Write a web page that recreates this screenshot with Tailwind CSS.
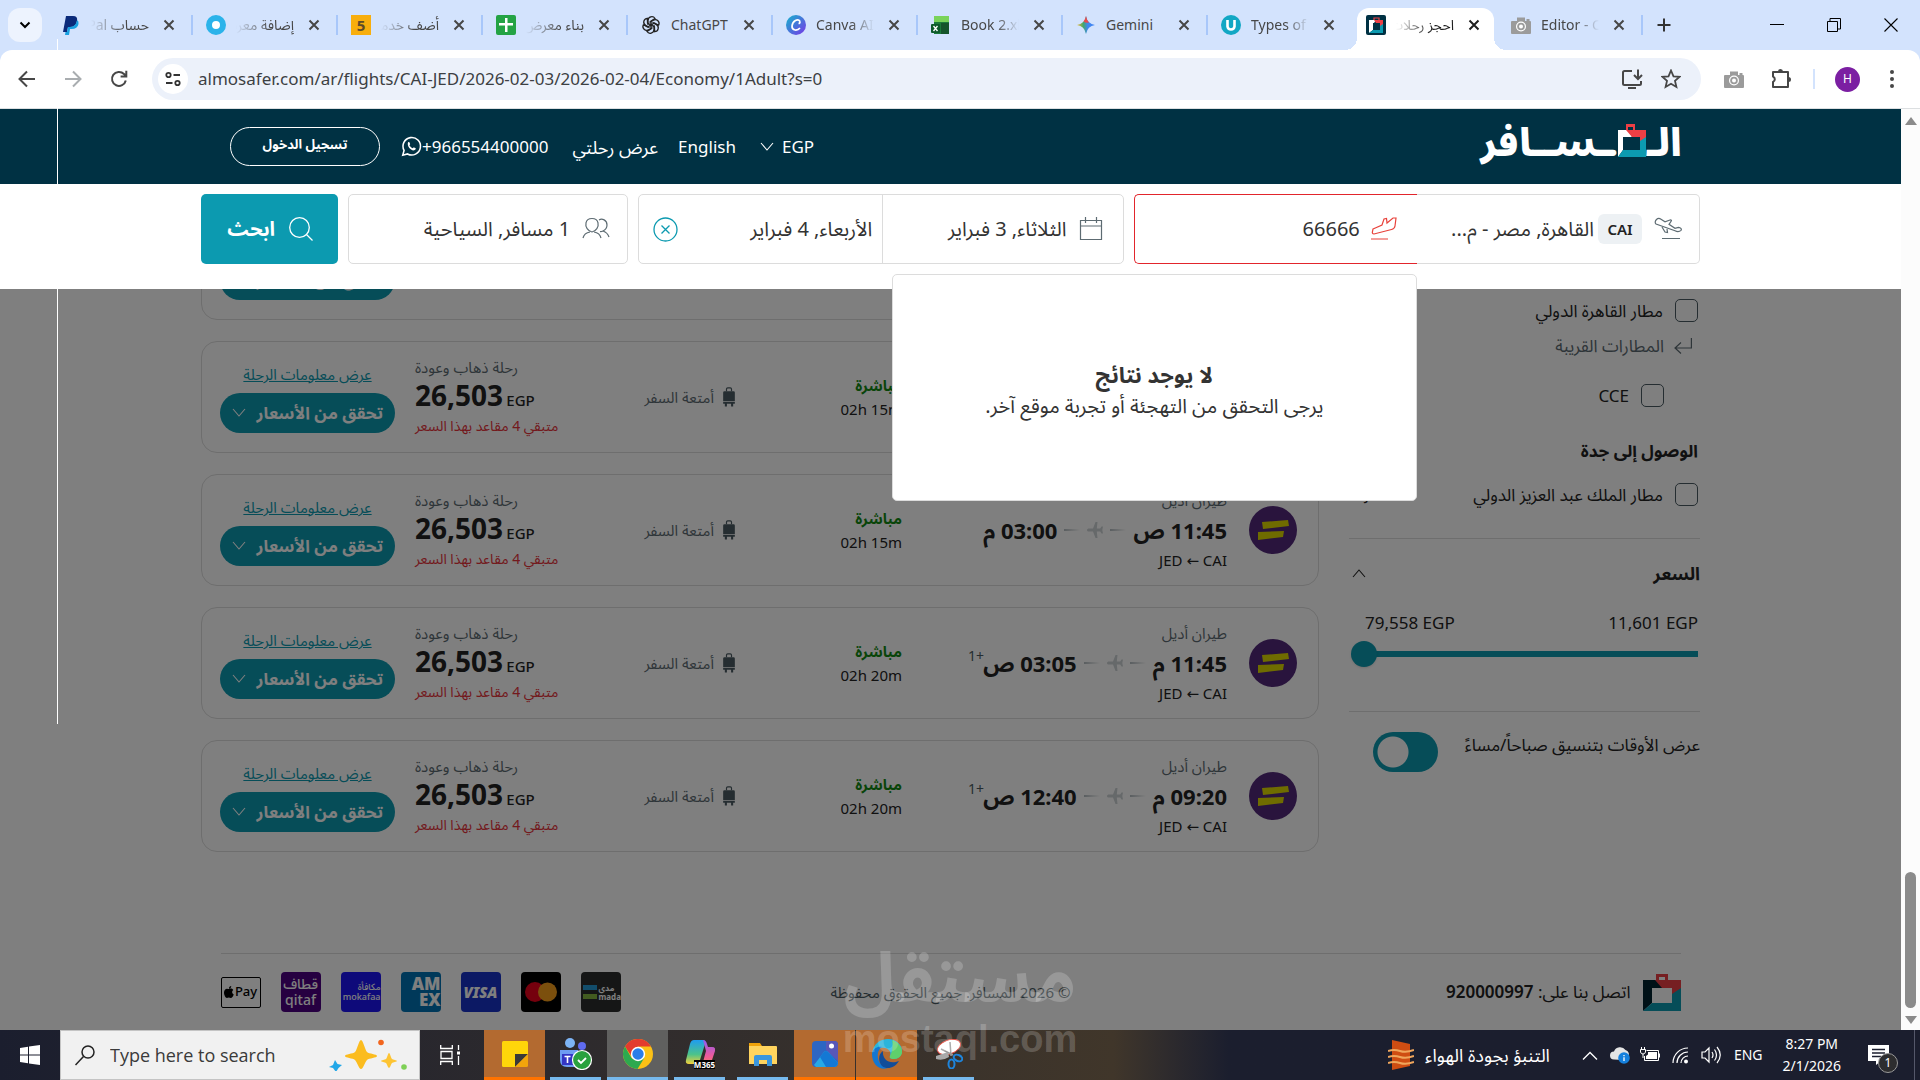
<!DOCTYPE html>
<html lang="ar">
<head>
    <meta charset="UTF-8">
    <meta name="viewport" content="width=device-width, initial-scale=1.0">
    <title>احجز رحلات الطيران - المسافر</title>
    <script src="https://cdn.jsdelivr.net/npm/@tailwindcss/browser@4"></script>
</head>
<body class="h-screen overflow-hidden bg-white font-['Noto_Sans','Noto_Sans_Arabic','DejaVu_Sans',sans-serif] text-[#222]">

  <!-- Icon sprite -->
  <svg class="hidden" xmlns="http://www.w3.org/2000/svg">
    <symbol id="i-close" viewBox="0 0 12 12"><path d="M1.5 1.5l9 9M10.5 1.5l-9 9" fill="none" stroke="currentColor" stroke-width="2"/></symbol>
    <symbol id="i-down" viewBox="0 0 14 9"><path d="M1 1l6 7 6-7" fill="none" stroke="currentColor" stroke-width="1.1"/></symbol>
    <symbol id="i-camera" viewBox="0 0 20 20"><path d="M2 6h4V2.5h8V6h1.5V4h3v2H19a1 1 0 0 1 1 1v11a1 1 0 0 1-1 1H1a1 1 0 0 1-1-1V7a1 1 0 0 1 1-1z" fill="#9b9b9b"/><circle cx="10" cy="11.500" r="5" fill="#fff"/><circle cx="10" cy="11.500" r="3.800" fill="#9b9b9b"/><circle cx="10" cy="11.500" r="2" fill="#fff"/></symbol>
    <symbol id="i-case" viewBox="0 0 38 38"><path d="M13 7V1h12v6h-3V4h-6v3z" fill="#ec3f45"/><path d="M0 7h14l6 8H9v15l-9 8z" fill="#00222f"/><path d="M12 7h26v9l-9 6v-7H19z" fill="#ec3f45"/><path d="M38 15v23H0l9-8h20v-9z" fill="#0c9ab0"/></symbol>
    <symbol id="i-bag" viewBox="0 0 16 24"><path d="M5 5V2.500A1.500 1.500 0 0 1 6.500 1h3A1.500 1.500 0 0 1 11 2.500V5" fill="none" stroke="#4a5a62" stroke-width="1.400"/><path d="M1 6.500A1.500 1.500 0 0 1 2.500 5h11A1.500 1.500 0 0 1 15 6.500V17H1zM1 18h14v2h-2v3.500h-2.500V20h-5v3.500H3V20H1z" fill="#4a5a62"/></symbol>
    <symbol id="i-plane" viewBox="0 0 16 16"><path d="M0 8c0-1 .8-1.600 2-1.600h4L8.500 0h2L9.800 6.400h3.400L14.500 4.500H16L15.300 8l.7 3.500h-1.500l-1.300-1.900H9.800l.7 6.400h-2L6 9.600H2C.8 9.600 0 9 0 8z" fill="#cdd2d5"/></symbol>
    <symbol id="i-adeal" viewBox="0 0 48 48"><circle cx="24" cy="24" r="24" fill="#52297a"/><path d="M13 16l26-2 1 6-26 3zM9 26l26-1-1 6-25 3z" fill="#dfd800"/></symbol>
  </svg>

  <div class="relative flex h-full flex-col">

    <!-- Tab strip -->
    <div class="flex h-[50px] shrink-0 items-end bg-[#d3e3fd] text-sm text-[#474747]">
      <div class="w-12 self-center pl-2">
        <button class="grid size-[34px] place-items-center rounded-xl bg-[#edf3fe] text-black" aria-label="Search tabs">
          <svg class="h-2 w-3" viewBox="0 0 12 8"><path d="M1.500 1.500L6 6l4.500-4.500" fill="none" stroke="currentColor" stroke-width="2"/></svg>
        </button>
      </div>
      <div id="tabs" class="flex"></div>
      <button class="ml-[13px] self-center" aria-label="New tab">
        <svg class="size-4" viewBox="0 0 16 16"><path d="M8 1.500v13M1.500 8h13" stroke="#333" stroke-width="2"/></svg>
      </button>
      <div class="ml-auto flex items-center gap-[43px] self-center pr-[22px]">
        <button aria-label="Minimize"><svg class="h-3.5 w-3.5" viewBox="0 0 14 14"><path d="M0 6.500h14" stroke="#000"/></svg></button>
        <button aria-label="Restore"><svg class="h-3.5 w-3.5" viewBox="0 0 14 14"><path d="M.5 3.500h10v10H.5zM3 3.500v-3h10.500v10.500h-3" fill="none" stroke="#000"/></svg></button>
        <button aria-label="Close"><svg class="h-3.5 w-3.5" viewBox="0 0 14 14"><path d="M.5.5l13 13M13.500.5l-13 13" stroke="#000" stroke-width="1.100"/></svg></button>
      </div>
    </div>

    <!-- Toolbar -->
    <div class="bg-[#d3e3fd]">
      <div class="flex h-[59px] items-center rounded-t-xl border-b border-[#dcdfe1] bg-white pr-[25px] pl-[18px]">
        <button aria-label="Back"><svg class="size-[18px]" viewBox="0 0 18 18"><path d="M17 9H2M9 1.500L1.500 9 9 16.500" fill="none" stroke="#474747" stroke-width="2"/></svg></button>
        <button class="ml-7" aria-label="Forward"><svg class="size-[18px]" viewBox="0 0 18 18"><path d="M1 9h15M9 1.500L16.500 9 9 16.500" fill="none" stroke="#a9adb0" stroke-width="2"/></svg></button>
        <button class="ml-7" aria-label="Reload"><svg class="size-[18px]" viewBox="0 0 18 18"><path d="M15.800 10.500A7 7 0 1 1 14 4l2 2M16.300.8V6.500h-5.700" fill="none" stroke="#474747" stroke-width="2"/></svg></button>
        <div class="ml-6 flex h-[42px] flex-1 items-center rounded-full bg-[#ecf1fa] px-1.5">
          <button class="grid size-[30px] place-items-center rounded-full bg-white" aria-label="Site information">
            <svg class="size-4" viewBox="0 0 16 16" fill="none" stroke="#333" stroke-width="1.800"><circle cx="3.500" cy="4" r="2.200"/><path d="M8.500 4H15M1 12h6.500"/><circle cx="12.500" cy="12" r="2.200"/></svg>
          </button>
          <input class="ml-2.5 min-w-0 flex-1 bg-transparent text-[17px] text-[#3c4043] outline-none" aria-label="Address" value="almosafer.com/ar/flights/CAI-JED/2026-02-03/2026-02-04/Economy/1Adult?s=0">
          <button class="mr-[18px]" aria-label="Install app"><svg class="size-[22px]" viewBox="0 0 22 22" fill="none" stroke="#474747" stroke-width="2"><path d="M11 3H3.500Q2 3 2 4.500v11Q2 17 3.500 17h15q1.500 0 1.500-1.500V13M7 20h8M17 1.500v9M13 7l4 4 4-4"/></svg></button>
          <button class="mr-3.5" aria-label="Bookmark"><svg class="size-5" viewBox="0 0 20 20"><path d="M10 1.500l2.500 5.800 6.200.5-4.700 4.100 1.400 6.100-5.400-3.200L4.600 18 6 11.900 1.300 7.800l6.200-.5z" fill="none" stroke="#474747" stroke-width="1.800"/></svg></button>
        </div>
        <button class="ml-[23px]" aria-label="Screenshot extension"><svg class="size-5"><use href="#i-camera"/></svg></button>
        <button class="ml-[25px]" aria-label="Extensions"><svg class="size-6" viewBox="0 0 24 24"><path d="M4 5h15v15H4v-5a3 3 0 0 0 0-5.500z" fill="none" stroke="#474747" stroke-width="2" stroke-linejoin="round"/><path d="M9 4.500a2.500 2.500 0 0 1 5 0zM19.500 10a2.500 2.500 0 0 1 0 5z" fill="#474747"/></svg></button>
        <span class="ml-5 h-[20px] w-0.5 bg-[#d3e3fd]"></span>
        <button class="ml-5 grid size-[25px] place-items-center rounded-full bg-[#7b1fa2] text-xs text-white" aria-label="Profile">H</button>
        <button class="ml-[29px]" aria-label="Menu"><svg class="h-5 w-1.5" viewBox="0 0 6 20" fill="#474747"><circle cx="3" cy="3" r="2"/><circle cx="3" cy="10" r="2"/><circle cx="3" cy="17" r="2"/></svg></button>
      </div>
    </div>

    <!-- Page -->
    <div class="flex min-h-0 flex-1">
      <div dir="rtl" class="flex min-w-0 flex-1 flex-col">

        <!-- Site header -->
        <header class="flex h-[75px] shrink-0 items-center justify-between bg-[#003143] pr-[219px] pl-[230px] text-white">
          <a href="#" class="flex items-end pb-3 text-[38px] leading-[48px] font-black" aria-label="المسافر">
            <span>الـ</span>
            <svg class="mb-2 h-[33px] w-7" viewBox="0 0 28 33"><path d="M8 6V0h9v6h-2V3h-5v3z" fill="#ec3f45"/><path d="M0 6h10l4 7H5v13l-5 7z" fill="#fff"/><path d="M8 6h20v8l-6 4v-5h-8z" fill="#ec3f45"/><path d="M28 13v20H0l5-7h17v-9z" fill="#0c9ab0"/></svg>
            <span>ـســافر</span>
          </a>
          <nav class="flex items-center text-[17px]">
            <a href="#egp" class="flex items-center gap-2">EGP <svg class="h-[9px] w-3.5"><use href="#i-down"/></svg></a>
            <a href="#en" class="mr-6">English</a>
            <a href="#trip" class="mr-5 text-lg">عرض رحلتي</a>
            <a href="#whatsapp" dir="ltr" class="mr-6 flex items-center">
              <svg class="size-[21px]" viewBox="0 0 24 24" fill="none" stroke="#fff" stroke-width="1.800"><path d="M2 22l1.500-5.500A10 10 0 1 1 7.500 20.500z"/><path d="M8 7.500c.5-1 1.500-.6 1.800 0l.6 1.500c.2.600-.8 1.200-.7 1.600.8 1.600 2 2.700 3.600 3.400.5.100 1-1.200 1.600-1l1.600.8c.8.500.2 2.200-1.300 2.600-4 .7-8.600-4.500-7.200-8.900z" fill="#fff" stroke="none"/></svg>
              +966554400000
            </a>
            <button class="mr-[21px] h-[39px] w-[150px] rounded-full border border-white pb-1 text-[13px] font-bold">تسجيل الدخول</button>
          </nav>
        </header>

        <!-- Search bar -->
        <form class="z-20 h-[105px] shrink-0 bg-white pt-2.5" onsubmit="return false">
          <div class="mx-auto grid h-[70px] max-w-[1499px] grid-cols-[566fr_485fr_280fr_137px] gap-2.5 text-xl text-[#333]">
            <div class="grid grid-cols-2">
              <button type="button" class="flex min-w-0 items-center rounded-r-[5px] border border-l-0 border-[#dcdcdc] pr-[17px] whitespace-nowrap">
                <svg class="h-6 w-7 shrink-0" viewBox="0 0 28 24" fill="none" stroke="#5d6b72" stroke-width="1.200"><path d="M2.500 2.500c1.500-1.500 3-1.300 4.500-.3l4 2.600 5-1.800c1-.3 2 .5 1 1.300l-2 3 6 4 3.500-1c2 .3 3.500 1.500 2.500 3-1.500 1.500-4 1.500-6 .5L2 7C.8 6 1 4 2.500 2.500zM8 10l3 5 2.500.5L13 12M8 21.500h18"/></svg>
                <span class="mr-3 grid h-[30px] w-11 place-items-center rounded-md bg-[#edf1f4] text-[15px] font-semibold text-[#222]">CAI</span>
                <span class="mr-1">القاهرة, مصر - م...</span>
              </button>
              <div class="relative flex items-center rounded-l-[5px] border border-r-0 border-[#e2252c] pr-[19px]">
                <svg class="h-6 w-7 shrink-0" viewBox="0 0 28 24" fill="none" stroke="#e8413a" stroke-width="1.200"><path d="M3 12l9-4 2-6 2.500-.5L17 6l6-5 3 0-1 8c-.3 2-1.500 3-3.500 3.500L4 17c-1.500 0-2-1-1.500-2.500zM1 22h17"/></svg>
                <input class="mr-2.5 w-40 min-w-0 bg-transparent outline-none" aria-label="الوجهة" value="66666">
                <!-- Suggestions -->
                <div class="absolute top-[79px] right-0 flex h-[227px] w-[525px] flex-col items-center justify-center rounded-[5px] border border-[#dcdcdc] bg-white pt-1">
                  <strong class="text-[22px] leading-8">لا يوجد نتائج</strong>
                  <p class="text-xl leading-8">يرجى التحقق من التهجئة أو تجربة موقع آخر.</p>
                </div>
              </div>
            </div>
            <div class="flex rounded-[5px] border border-[#dcdcdc]">
              <button type="button" class="flex flex-1 items-center gap-3 border-l border-[#dcdcdc] pr-5">
                <svg class="size-6" viewBox="0 0 24 24" fill="none" stroke="#5d6b72" stroke-width="1.200"><path d="M1.500 3.500h21v19h-21zM1.500 9h21M6.500 0v6M17.500 0v6"/></svg>
                الثلاثاء, 3 فبراير
              </button>
              <div class="flex flex-1 items-center justify-between pr-2.5 pl-3.5">
                <button type="button">الأربعاء, 4 فبراير</button>
                <button type="button" aria-label="إزالة تاريخ العودة"><svg class="size-[25px]" viewBox="0 0 25 25" fill="none" stroke="#0c9ab0" stroke-width="1.300"><circle cx="12.500" cy="12.500" r="11.500"/><path d="M8.500 8.500l8 8M16.500 8.500l-8 8"/></svg></button>
              </div>
            </div>
            <button type="button" class="flex items-center gap-3 rounded-[5px] border border-[#dcdcdc] pr-[17px]">
              <svg class="h-6 w-7" viewBox="0 0 28 24" fill="none" stroke="#5d6b72" stroke-width="1.200"><path d="M10 15c-4-1-7-5-6-9 1-6 11-6 12 0 1 4-2 8-6 9zM1 21c1-4 4-5.500 7-6M19 21c-1-4-4-5.500-7-6M17 3c3-2 8 0 8 5 0 3-2 5-4 6 3 1 5 3 6 6M18 14.500c1 .2 2 0 3-.5"/></svg>
              1 مسافر, السياحية
            </button>
            <button type="submit" class="flex items-center gap-3.5 rounded-[5px] bg-[#0c9ab0] pr-[25px] font-bold text-white">
              <svg class="size-6" viewBox="0 0 24 24" fill="none" stroke="#fff" stroke-width="1.300"><circle cx="10.500" cy="10.500" r="9.800"/><path d="M17.500 17.500l6 6"/></svg>
              ابحث
            </button>
          </div>
        </form>

        <!-- Results -->
        <main class="relative flex min-h-0 flex-1 flex-col overflow-hidden bg-white">
          <div class="mx-auto flex w-full max-w-[1499px] gap-[30px]">

            <!-- Filters -->
            <aside class="w-[351px] shrink-0 pt-2.5 text-[17px]">
              <div class="px-0.5">
                <label class="flex h-[23px] items-center gap-3"><input type="checkbox" class="size-[23px] appearance-none rounded-[5px] border border-[#4a5a62]">مطار القاهرة الدولي</label>
                <p class="mt-3 flex h-6 items-center gap-2.5 pr-1.5 text-[#5d6b72]">
                  <svg class="h-4 w-[18px]" viewBox="0 0 18 16" fill="none" stroke="#5d6b72" stroke-width="1.200"><path d="M17.400 0v10H1M7 4.500L1 10l6 5.500"/></svg>
                  المطارات القريبة
                </p>
                <label class="mt-[26px] mr-[34px] flex h-[23px] items-center gap-3"><input type="checkbox" class="size-[23px] appearance-none rounded-[5px] border border-[#4a5a62]">CCE</label>
                <h4 class="mt-8 h-6 leading-6 font-bold">الوصول إلى جدة</h4>
                <label class="mt-5 flex h-[23px] items-center gap-3"><input type="checkbox" class="size-[23px] appearance-none rounded-[5px] border border-[#4a5a62]">مطار الملك عبد العزيز الدولي <span class="mr-auto ml-3.5 text-sm">JED</span></label>
              </div>
              <section class="mt-8 border-t border-[#dcdcdc] pt-5">
                <h3 class="flex items-center justify-between text-lg leading-7 font-bold">السعر <svg class="ml-[3px] h-[9px] w-3.5 rotate-180"><use href="#i-down"/></svg></h3>
                <div dir="ltr" class="mt-6 flex justify-between pr-0.5 pl-4 leading-6"><span>79,558 EGP</span><span>11,601 EGP</span></div>
                <input dir="ltr" type="range" value="0" aria-label="السعر" class="mt-[6px] mr-0.5 block h-[26px] w-[347px] appearance-none bg-[linear-gradient(#0c9ab0,#0c9ab0)] bg-[length:334px_6px] bg-right bg-no-repeat [&::-webkit-slider-thumb]:size-[26px] [&::-webkit-slider-thumb]:appearance-none [&::-webkit-slider-thumb]:rounded-full [&::-webkit-slider-thumb]:bg-[#0c9ab0] [&::-webkit-slider-thumb]:shadow">
              </section>
              <section class="mt-11 flex items-start justify-between border-t border-[#dcdcdc] pt-5">
                <label for="ampm" class="leading-[26px]">عرض الأوقات بتنسيق صباحاً/مساءً</label>
                <input id="ampm" type="checkbox" checked class="ml-6 h-10 w-[65px] shrink-0 appearance-none rounded-full bg-[#0c9ab0] bg-[radial-gradient(circle_at_20px_20px,#fff_15px,transparent_16px)]">
              </section>
            </aside>

            <div id="flights" class="-mt-[81px] flex flex-1 flex-col gap-[21px]"></div>
          </div>

          <!-- Footer -->
          <footer class="mx-auto mt-auto grid h-[77px] w-full max-w-[1460px] shrink-0 grid-cols-3 items-center border-t border-[#dcdcdc] text-[15px]">
            <div class="flex items-center gap-3">
              <svg class="size-[38px]"><use href="#i-case"/></svg>
              <p class="text-[17px]">اتصل بنا على: <a href="#tel" class="font-semibold">920000997</a></p>
            </div>
            <p class="text-center text-[#4a5a62]">© 2026 المسافر. جميع الحقوق محفوظة</p>
            <ul dir="ltr" class="flex items-center gap-5 justify-self-end">
              <li class="flex h-[31px] w-10 items-center justify-center gap-px rounded-xs border border-black text-[13px] font-medium text-black">
                <svg class="h-3 w-2.5" viewBox="0 0 10 12"><path d="M5 3c1-.6 3-.8 4.300.9C7.500 5 7.800 7.500 9.700 8.500 9 10.500 8 12 6.800 12c-.8 0-1.200-.5-2-.5S3.600 12 2.900 12C1.500 12 0 9 0 6.500S1.600 2.700 3 2.700c.8 0 1.400.3 2 .3zM5 2.500C4.900 1.200 6 0 7.200 0 7.400 1.300 6.300 2.600 5 2.500z"/></svg>Pay
              </li>
              <li class="flex size-10 flex-col items-center justify-center rounded-[4px] bg-[#4c0082] text-sm leading-4 font-medium text-white"><span>قطاف</span><span>qitaf</span></li>
              <li class="flex size-10 flex-col items-end justify-center rounded-[4px] bg-[#1d14f5] text-[9px] leading-[10px] font-medium text-white"><span>مكافأة</span><span>mokafaa</span></li>
              <li class="flex size-10 flex-col items-end justify-center overflow-hidden rounded-[4px] bg-[#0072b4] text-[17px] leading-4 font-black text-white"><span>AM</span><span>EX</span></li>
              <li class="grid size-10 place-items-center rounded-[4px] bg-[#1832c8] text-[15px] font-black text-white italic">VISA</li>
              <li class="grid size-10 place-items-center rounded-[4px] bg-black"><svg class="h-5 w-8" viewBox="0 0 32 20"><circle cx="10" cy="10" r="10" fill="#eb001b"/><circle cx="22.500" cy="10" r="9.500" fill="#f79e1b"/></svg></li>
              <li class="flex size-10 items-center gap-0.5 rounded-[4px] bg-[#2a2c2c] pl-0.5 text-[8px] leading-[9px] font-bold text-white">
                <span class="flex flex-col gap-1"><i class="block h-[5px] w-[14px] bg-[#259bd6]"></i><i class="block h-[5px] w-[14px] bg-[#84b740]"></i></span>
                <span class="flex flex-col"><span>مدى</span><span>mada</span></span>
              </li>
            </ul>
          </footer>
          <div class="absolute inset-0 bg-black/50"></div>
        </main>
      </div>

      <!-- Scrollbar -->
      <div class="flex w-[19px] shrink-0 flex-col items-center bg-[#fcfcfc] pt-2 pb-1.5">
        <svg class="h-2 w-3" viewBox="0 0 12 8"><path d="M6 0l6 8H0z" fill="#8b8b8b"/></svg>
        <div class="mt-auto mb-2 h-[136px] w-[11px] rounded-full bg-[#8b8b8b]"></div>
        <svg class="h-2 w-3" viewBox="0 0 12 8"><path d="M6 8l6-8H0z" fill="#8b8b8b"/></svg>
      </div>
    </div>

    <!-- Taskbar -->
    <div class="flex h-[50px] shrink-0 items-stretch bg-linear-to-r from-[#1b1e2e] via-[#40362a] via-[58%] to-[#1b1e2e] to-[64%] text-white">
      <button class="grid w-[60px] place-items-center" aria-label="Start"><svg class="size-5" viewBox="0 0 20 20" fill="#fff"><path d="M0 3l8-1.200V9.500H0zM9 1.600L20 0v9.500H9zM0 10.500h8v7.700L0 17zM9 10.500h11V20L9 18.400z"/></svg></button>
      <label class="flex w-[360px] items-center border border-[#c4c4c4] bg-[#f1f1f1] pr-2.5 pl-3.5 text-[#333]">
        <svg class="h-[21px] w-5" viewBox="0 0 20 21" fill="none" stroke="#222" stroke-width="1.500"><circle cx="13" cy="7" r="6"/><path d="M8.500 11.500L.5 20"/></svg>
        <input class="ml-[15px] min-w-0 flex-1 font-['Open_Sans','Noto_Sans',sans-serif] text-lg outline-none placeholder:text-[#3a3a3a]" placeholder="Type here to search" aria-label="Search">
        <svg class="h-8 w-20" viewBox="0 0 80 32"><path d="M32 1c2 0 4 10 6 12s10 2 10 4-8 2-10 4-4 9-6 9-4-7-6-9-10-2-10-4 8-2 10-4 4-12 6-12z" fill="#fbbc1f"/><path d="M60 14c1 0 2 5 3 6s5 1 5 2-4 1-5 2-2 5-3 5-2-4-3-5-5-1-5-2 4-1 5-2 2-6 3-6z" fill="#fdc433"/><path d="M6 21l2.500 4 4.500 1-3.500 3L7 33l-3-4-4-1 4-2z" fill="#22a7e8"/><circle cx="52" cy="3.500" r="2.800" fill="#f2651d"/><circle cx="75" cy="28" r="2.800" fill="#7ed056"/></svg>
      </label>
      <button class="grid w-16 place-items-center pr-1" aria-label="Task view"><svg class="size-5" viewBox="0 0 20 20" fill="none" stroke="#fff" stroke-width="1.300"><path d="M1 6.500h11v7H1zM.7 0v3.500h11.600V0M.7 20v-3.500h11.600V20M18.500 0v5M18.500 11v9"/><path d="M17 6.500h3v3h-3z" fill="#fff" stroke="none"/></svg></button>
      <button class="grid w-[61px] place-items-center border-b-[3px] border-[#ff7300] bg-[#b36a30]" aria-label="Sticky Notes"><svg class="size-[26px]" viewBox="0 0 26 26"><path d="M0 1.500Q0 0 1.500 0h23Q26 0 26 1.500V13L13 26H1.500Q0 26 0 24.500z" fill="#ffd60a"/><path d="M13 13h13L13 26z" fill="#3a3a38"/><path d="M26 13v11.500q0 1.500-1.500 1.500H13z" fill="#f2a50c"/></svg></button>
      <button class="mr-1.5 ml-[5px] grid w-[51px] place-items-center border-b-[3px] border-[#76b9ed]" aria-label="Teams"><svg class="h-8 w-[34px]" viewBox="0 0 34 32"><circle cx="11" cy="5" r="5" fill="#7db4f5"/><circle cx="23" cy="8" r="4" fill="#5f6bf0"/><path d="M1 12h18v17H8q-7 0-7-7z" fill="#6e9cf2"/><path d="M18 14h10v14H15z" fill="#6a5cf0"/><path d="M3 16h11v11H3z" fill="#3436c4"/><path d="M5.500 18.500h6M8.500 18.500v6.500" stroke="#fff" stroke-width="1.600"/><circle cx="23" cy="22" r="9.500" fill="#2aa13e" stroke="#fff" stroke-width="1.200"/><path d="M19 22l3 3 5-5" fill="none" stroke="#fff" stroke-width="1.800"/></svg></button>
      <button class="grid w-[61px] place-items-center border-b-[3px] border-[#76b9ed] bg-[#60605f]" aria-label="Chrome"><svg class="size-[30px]" viewBox="0 0 30 30"><circle cx="15" cy="15" r="15" fill="#fbc116"/><path d="M2 7.500A15 15 0 0 1 28 7.500H15L9 18z" fill="#e33b2e"/><path d="M2 7.500A15 15 0 0 0 14.500 30L21.500 18.500 15 22 8.500 19z" fill="#2da94f"/><circle cx="15" cy="15" r="7.200" fill="#fff"/><circle cx="15" cy="15" r="5.700" fill="#2b7de9"/></svg></button>
      <button class="mx-1.5 grid w-[51px] place-items-center border-b-[3px] border-[#76b9ed]" aria-label="Microsoft 365"><svg class="size-[30px]" viewBox="0 0 30 30"><defs><linearGradient id="ga" x2="0" y2="1"><stop stop-color="#1f9cf0"/><stop offset=".6" stop-color="#4cc38a"/><stop offset="1" stop-color="#f4d03a"/></linearGradient><linearGradient id="gb" x2="0" y2="1"><stop stop-color="#8d5cf2"/><stop offset=".6" stop-color="#ee5a9a"/><stop offset="1" stop-color="#f58b52"/></linearGradient></defs><path d="M9 1h9q3 0 2 4l-5 16q-1 4-5 4H4q-4 0-3-4L5 5q1-4 4-4z" fill="url(#ga)"/><path d="M18 1q3 0 4 4l1 3h4q4 0 3 4l-4 12q-1 4-5 4h-8q4-1 5-5l3-11z" fill="url(#gb)"/><path d="M9 21h21v9H9z" fill="#000"/><text x="19.500" y="28.500" font-size="8" font-weight="700" text-anchor="middle" fill="#fff">M365</text></svg></button>
      <button class="mx-1.5 grid w-[51px] place-items-center border-b-[3px] border-[#76b9ed]" aria-label="File Explorer"><svg class="h-6 w-7" viewBox="0 0 28 24"><path d="M0 1h11l2 3H0z" fill="#f0a30a"/><path d="M0 4h27q1 0 1 1v17H0z" fill="#ffd45e"/><path d="M5 24v-9q0-2 2-2h14q2 0 2 2v9h-5v-6h-8v6z" fill="#3a96dd"/></svg></button>
      <button class="grid w-[61px] place-items-center border-b-[3px] border-[#ff7300] bg-[#b36a30]" aria-label="Photos"><svg class="size-[26px]" viewBox="0 0 26 26"><rect width="26" height="26" rx="4" fill="#2d66c3"/><path d="M14 0h8q4 0 4 4v16L14 9z" fill="#5857b8"/><path d="M2 24L12 11q2-2 4 0l10 11q-1 4-4 4H4z" fill="#27a9e6"/><path d="M12 11q2-2 4 0l10 11q-1 4-4 4H14L8 16z" fill="#1478d4"/><circle cx="19.500" cy="5" r="2.500" fill="#fff"/></svg></button>
      <button class="ml-px grid w-[61px] place-items-center border-b-[3px] border-[#ff7300] bg-[#b36a30]" aria-label="Edge"><svg class="size-[30px]" viewBox="0 0 30 30"><path d="M0 15C1 5 8 0 16 0c8 0 14 6 14 12 0 5-4 8-8 8-3 0-5-1-4-3 2-6-4-9-9-8-4 1-8 3-9 6z" fill="#2bb5dc"/><path d="M20 1c6 2 10 7 10 12 0 4-4 7-8 7-3 0-5-1-4-3 3-5 3-11 2-16z" fill="#5fd06c"/><path d="M0 15c1-6 6-8 10-7-6 3-7 18 6 21C7 32 0 25 0 15z" fill="#1277d3"/><path d="M11 12c-1 8 6 14 16 10-4 7-12 9-17 5-4-4-4-12 1-15z" fill="#124d99"/></svg></button>
      <button class="mx-1.5 grid w-[51px] place-items-center border-b-[3px] border-[#76b9ed]" aria-label="Snip and Sketch"><svg class="h-[30px] w-7" viewBox="0 0 28 30"><ellipse cx="14" cy="8" rx="12" ry="7" fill="#fff" stroke="#e04a3f" transform="rotate(-20 14 8)"/><path d="M1 17l12-4 1 5q-6 4-13 2z" fill="#a9a9a9"/><path d="M15 3l1 14M6 10l12 6" stroke="#999" stroke-width="1.500"/><ellipse cx="23" cy="19" rx="4.500" ry="3" fill="none" stroke="#1e85dc" stroke-width="2" transform="rotate(25 23 19)"/><ellipse cx="16.500" cy="25" rx="3" ry="4.500" fill="none" stroke="#1e85dc" stroke-width="2"/></svg></button>

      <div class="ml-auto flex items-center">
        <a href="#weather" class="flex items-center gap-[11px]">
          <svg class="h-[30px] w-[26px]" viewBox="0 0 26 30"><path d="M4 0l18 4v22L4 30z" fill="#cf4d12"/><path d="M0 11q6-2 12 0t14-1M0 17q6-2 12 0t14-1M0 23q6-2 12 0t14-1" fill="none" stroke="#f0a65c" stroke-width="2"/></svg>
          <span dir="rtl" class="text-lg">التنبؤ بجودة الهواء</span>
        </a>
        <svg class="ml-8 h-[9px] w-4" viewBox="0 0 16 9"><path d="M1 8.500l7-7 7 7" fill="none" stroke="#fff" stroke-width="1.300"/></svg>
        <svg class="ml-3 h-[18px] w-5" viewBox="0 0 20 18"><path d="M4 13.500a4 4 0 0 1 0-8A6.500 6.500 0 0 1 15.500 4 4.500 4.500 0 0 1 18 11l-5 3z" fill="#e4e4e4"/><circle cx="14" cy="12" r="5.800" fill="#1580dd"/><path d="M14 9v1.300M14 11.300V15" stroke="#fff" stroke-width="1.300"/></svg>
        <svg class="ml-2.5 h-4 w-5" viewBox="0 0 20 16" fill="none" stroke="#fff"><path d="M6.500 3.500h12v10H4.500V9"/><path d="M8 5h9v7H6V9l2-1.500z" fill="#fff" stroke="none"/><path d="M19.500 6.500v4M.5 2.500h5V5Q5 7 3 7T.5 5zM1.500 0v2.500M4.500 0v2.500M3 7v4"/></svg>
        <svg class="ml-3 h-[17px] w-[17px]" viewBox="0 0 17 17" fill="none" stroke="#fff" stroke-width="1.200"><path d="M1 16A15 15 0 0 1 16 1M5 16A11 11 0 0 1 16 5M9 16a7 7 0 0 1 7-7"/><circle cx="14" cy="14.500" r="2" fill="#fff" stroke="none"/></svg>
        <svg class="ml-3 h-[18px] w-5" viewBox="0 0 20 18" fill="none" stroke="#fff" stroke-width="1.200"><path d="M1 6h3l4-4v14l-4-4H1zM11 6q2 3 0 6M13.500 3.500q4 5.500 0 11M16 1q6.500 8 0 16"/></svg>
        <span class="ml-[13px] text-sm">ENG</span>
        <div class="ml-5 text-center text-sm leading-[22px]"><p>8:27 PM</p><p>2/1/2026</p></div>
        <button class="relative mr-[25px] ml-[27px]" aria-label="Notifications">
          <svg class="h-5 w-[21px]" viewBox="0 0 21 20"><path d="M0 0h21v16h-8l-5 4v-4H0z" fill="#fff"/><path d="M4 4.500h13M4 8h13M4 11.500h9" stroke="#1b1e2e" stroke-width="1.300"/></svg>
          <span class="absolute top-2 left-2.5 grid size-5 place-items-center rounded-full border border-[#999] bg-[#2d2d2f] text-xs">1</span>
        </button>
        <span class="mr-[5px] h-full w-px bg-[#55586a]"></span>
      </div>
    </div>

    <!-- Screen overlays -->
    <div class="absolute top-[39px] left-[57px] h-[685px] w-px bg-white"></div>
    <div class="absolute top-[930px] left-[845px] z-30 flex w-[230px] flex-col items-center font-bold text-white/20">
      <span class="text-[70px] leading-[90px]">مستقل</span>
      <span class="font-['Liberation_Sans',sans-serif] text-[38px] leading-[38px]">mostaql.com</span>
    </div>
  </div>

<script>
const favicons = {
  paypal: '<path d="M5 1h7q5 0 4 5-1 6-7 6H7l-1 5H2z" fill="#0a2a7a"/><path d="M16 5q2 1 1.500 4-1 5-7 5H9l-1 6H4l.5-3H6l1-5h2q6 0 7-7z" fill="#18a0e0"/>',
  ring: '<circle cx="10" cy="10" r="7" fill="#fff" stroke="#2bb3ea" stroke-width="6"/>',
  five: '<path d="M0 0h20v20H0z" fill="#f8ae0d"/><text x="10" y="15.500" font-size="15" font-weight="700" text-anchor="middle" fill="#5c4a2a">5</text>',
  sheet: '<rect width="20" height="20" rx="2" fill="#24a344"/><path d="M9 3h2.500v5H17v2.500h-5.500V17H9v-6.500H3V8h6z" fill="#fff"/>',
  gpt: '<g fill="none" stroke="#222" stroke-width="1.300"><path id="petal" d="M7 10V5.500a3.800 3.800 0 0 1 7-2L10 6v5.500"/><use href="#petal" transform="rotate(60 10 10)"/><use href="#petal" transform="rotate(120 10 10)"/><use href="#petal" transform="rotate(180 10 10)"/><use href="#petal" transform="rotate(240 10 10)"/><use href="#petal" transform="rotate(300 10 10)"/></g>',
  canva: '<defs><linearGradient id="gc" x2="1" y2="1"><stop stop-color="#12b5cc"/><stop offset="1" stop-color="#7a35e8"/></linearGradient></defs><circle cx="10" cy="10" r="10" fill="url(#gc)"/><path d="M14 6.500C12 3 6.500 6 6 11c-.2 5 5.500 5 8 2M14 6.500q0 2-1.500 2" fill="none" stroke="#fff" stroke-width="1.700"/>',
  excel: '<path d="M3 1h15v18H3z" fill="#1b7a3a"/><path d="M3 1h15v6H3z" fill="#7ad35a"/><path d="M10 8h8v11h-8z" fill="#15552b"/><rect y="9" width="9" height="9" rx="1" fill="#0d5a2c"/><path d="M2.500 11l4 5M6.500 11l-4 5" stroke="#fff" stroke-width="1.300"/>',
  gemini: '<defs><linearGradient id="gg" x1="0" y1=".5" x2="1" y2=".5"><stop stop-color="#f2b632"/><stop offset=".35" stop-color="#42a86b"/><stop offset=".6" stop-color="#3f86f0"/><stop offset="1" stop-color="#4285f4"/></linearGradient></defs><path d="M10 1q1.500 8 9 9-7.500 1-9 9-1.500-8-9-9 7.500-1 9-9z" fill="url(#gg)"/><path d="M10 1q.8 4.500 3 6.500-3 1-5.500-1Q9.500 4 10 1z" fill="#ea4b4b"/>',
  udemy: '<circle cx="10" cy="10" r="10" fill="#12a7c4"/><path d="M6.500 5v6.500q.5 3 3.500 3t3.500-3V5" fill="none" stroke="#fff" stroke-width="2.600"/>',
  almosafer: '<rect width="20" height="20" rx="2" fill="#003143"/><path d="M8 5V3h5v2" fill="none" stroke="#ec3f45" stroke-width="1.200"/><path d="M3 5h7l-2 3H7v7l-4 3z" fill="#fff"/><path d="M8 5h9v5l-3 2V8h-4z" fill="#ec3f45"/><path d="M17 9v9H3l4-3h7v-4z" fill="#0c9ab0"/>',
  camera: '<use href="#i-camera" width="20" height="20"/>'
};

const tabs = [
  ['paypal', 'حساب PayPal', true], ['ring', 'إضافة معرض', true], ['five', 'أضف خدمة', true],
  ['sheet', 'بناء معرض أعمال', true], ['gpt', 'ChatGPT', false], ['canva', 'Canva AI', false],
  ['excel', 'Book 2.xlsx', false], ['gemini', 'Gemini', false], ['udemy', 'Types of data', false],
  ['almosafer', 'احجز رحلات الطيران', true], ['camera', 'Editor - Capture', false]
];

document.getElementById('tabs').innerHTML = tabs.map(([icon, title, rtl]) => {
  const active = icon === 'almosafer';
  const fade = rtl
    ? '[mask-image:linear-gradient(to_right,transparent,#000_60%)]'
    : '[mask-image:linear-gradient(to_right,#000_60%,transparent)]';
  const curves = active ? `
    <span class="absolute bottom-0 -left-3 size-3 bg-[radial-gradient(circle_at_0_0,transparent_12px,#fff_12px)]"></span>
    <span class="absolute -right-3 bottom-0 size-3 bg-[radial-gradient(circle_at_100%_0,transparent_12px,#fff_12px)]"></span>` : '';
  const line = active || icon === 'udemy' ? '' : '<span class="absolute top-[7px] right-0 h-5 w-0.5 bg-[#a8c7fa]"></span>';
  return `
    <div class="relative flex h-[42px] w-[145px] px-1">
      <div class="${active ? 'relative flex h-full w-full items-center rounded-t-xl bg-white pb-2 text-[#1f1f1f]' : 'flex h-full w-full items-center pb-2'}">
        ${curves}
        <svg class="ml-[9px] size-5 shrink-0" viewBox="0 0 20 20">${favicons[icon]}</svg>
        <a href="#${icon}" dir="${rtl ? 'rtl' : 'ltr'}" class="ml-2.5 w-[58px] overflow-hidden whitespace-nowrap ${icon === 'gpt' || icon === 'gemini' ? '' : fade}">${title}</a>
        <button class="ml-3.5" aria-label="Close tab"><svg class="size-3"><use href="#i-close"/></svg></button>
      </div>
      ${line}
    </div>`;
}).join('');

const flights = [
  { from: '11:45 ص', to: '03:00 م', time: '02h 15m', next: false, seats: '' },
  { from: '11:45 ص', to: '03:00 م', time: '02h 15m', next: false, seats: 'متبقي 4 مقاعد بهذا السعر' },
  { from: '11:45 ص', to: '03:00 م', time: '02h 15m', next: false, seats: 'متبقي 4 مقاعد بهذا السعر' },
  { from: '11:45 م', to: '03:05 ص', time: '02h 20m', next: true, seats: 'متبقي 4 مقاعد بهذا السعر' },
  { from: '09:20 م', to: '12:40 ص', time: '02h 20m', next: true, seats: 'متبقي 4 مقاعد بهذا السعر' }
];

document.getElementById('flights').innerHTML = flights.map(f => `
  <article class="flex h-28 items-center rounded-2xl border border-[#dcdcdc] pr-[21px] pl-[18px]">
    <svg class="size-12 shrink-0"><use href="#i-adeal"/></svg>
    <div class="mr-[22px] w-[325px]">
      <p class="text-[15px] leading-6 text-[#5d6b72]">طيران أديل</p>
      <div class="flex items-center gap-[7px] text-[22px] leading-9 font-bold whitespace-nowrap">
        <span>${f.from}</span>
        <i class="h-0.5 w-4 bg-linear-to-r from-[#b4bcc0] to-transparent"></i>
        <svg class="size-4"><use href="#i-plane"/></svg>
        <i class="h-0.5 w-4 bg-linear-to-r from-[#b4bcc0] to-transparent"></i>
        <span>${f.to}</span>
        ${f.next ? '<sup dir="ltr" class="-mr-2 text-sm font-normal text-[#4a5a62]">1+</sup>' : ''}
      </div>
      <p class="text-[15px] leading-6">JED ← CAI</p>
    </div>
    <div class="w-[166px] text-[15px] leading-6">
      <p class="font-bold text-[#138a13]">مباشرة</p>
      <p dir="ltr" class="text-right">${f.time}</p>
    </div>
    <p class="flex flex-1 items-center gap-2 text-[15px] text-[#5d6b72]"><svg class="h-5 w-3.5"><use href="#i-bag"/></svg>أمتعة السفر</p>
    <div dir="ltr" class="w-[170px] pb-1">
      <p class="text-[15px] leading-6 text-[#5d6b72]">رحلة ذهاب وعودة</p>
      <p class="text-[28px] leading-8 font-bold">26,503 <span class="-ml-1 text-[15px] font-medium">EGP</span></p>
      <p dir="rtl" class="h-5 w-fit text-sm leading-5 whitespace-nowrap text-[#e6323a]">${f.seats}</p>
    </div>
    <div class="mr-5 flex w-[175px] flex-col items-center gap-[7px]">
      <a href="#info" class="text-[15px] leading-6 text-[#0c9ab0] underline">عرض معلومات الرحلة</a>
      <button class="flex h-10 w-full items-center justify-between rounded-full bg-[#0c9ab0] px-3 text-[17px] font-bold text-white">تحقق من الأسعار <svg class="h-[9px] w-3.5"><use href="#i-down"/></svg></button>
    </div>
  </article>`).join('');
</script>
</body>
</html>
